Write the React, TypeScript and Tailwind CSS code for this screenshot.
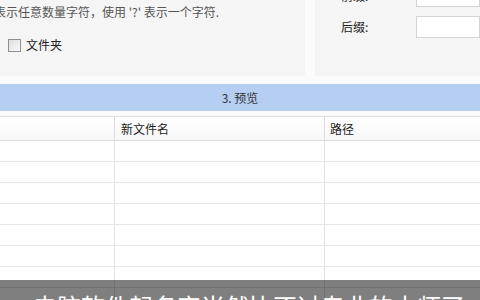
const cols = "grid grid-cols-[115px_210px_155px]";

const Row = () => (
  <div className={`${cols} h-[21px] border-b border-[#e6e6e6]`}>
    <div className="border-r border-[#e2e2e2]" />
    <div className="border-r border-[#e2e2e2]" />
    <div />
  </div>
);

export default function App() {
  return (
    <div
      className="relative w-[480px] h-[300px] overflow-hidden bg-[#fbfbfb] text-[12px] text-[#222]"
      style={{ fontFamily: '"Noto Sans CJK SC", "Noto Sans", sans-serif' }}
    >
      <div className="flex h-[76px] gap-[10px]">
        <div className="w-[305px] bg-[#f5f5f5]">
          <div className="-ml-[6px] pt-[4px] leading-[16px] whitespace-nowrap text-[#555]">
            表示任意数量字符，使用 '?' 表示一个字符.
          </div>
          <label className="flex items-center gap-[5px] ml-[8px] mt-[18px] leading-[14px]">
            <span className="w-[13px] h-[13px] border border-[#8f8f8f] bg-gradient-to-br from-[#dcdcdc] to-[#fbfbfb]" />
            <span>文件夹</span>
          </label>
        </div>
        <div className="flex-1 bg-[#f5f5f5] -mt-[15px]">
          <div className="flex items-center h-[22px]">
            <span className="w-[28px] ml-[26px] whitespace-nowrap">前缀:</span>
            <div className="ml-[47px] flex-1 h-[22px] bg-white border border-[#d4d4d4]" />
          </div>
          <div className="flex items-center h-[22px] mt-[9px]">
            <span className="w-[28px] ml-[26px] whitespace-nowrap">后缀:</span>
            <div className="ml-[47px] flex-1 h-[22px] bg-white border border-[#d4d4d4]" />
          </div>
        </div>
      </div>

      <div className="mt-[8px] h-[27px] bg-[#b5cef2] flex items-center justify-center text-[#333] text-[12px]">
        3. 预览
      </div>

      <div className="mt-[5px] bg-white">
        <div className={`${cols} h-[25px] border-t border-[#a8a8a8] border-b border-[#dcdcdc] bg-gradient-to-b from-white to-[#f7f7f7]`}>
          <div className="border-r border-[#dcdcdc]" />
          <div className="border-r border-[#dcdcdc] flex items-center pl-[6px]">新文件名</div>
          <div className="flex items-center pl-[5px]">路径</div>
        </div>
        {Array.from({ length: 8 }, (_, i) => (
          <Row key={i} />
        ))}
      </div>

      <div className="absolute left-0 right-0 top-[280px] h-[40px] bg-black/50">
        <div className="pl-[33px] pt-[14px] text-[24px] leading-none text-white whitespace-nowrap">
          电脑软件起名字当然比不过专业的大师了
        </div>
      </div>
    </div>
  );
}
